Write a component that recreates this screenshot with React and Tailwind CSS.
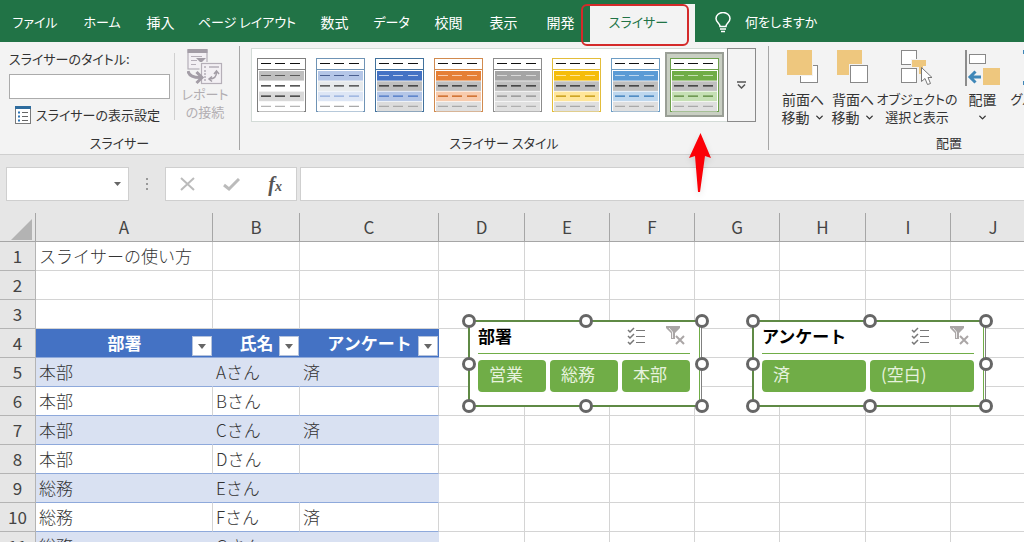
import { ChevronDown } from "lucide-react";

const tabs = [
  { name: "ファイル", width: "w-[70px] text-[13px]" },
  { name: "ホーム", width: "w-[64px] text-[13px]" },
  { name: "挿入", width: "w-[53px]" },
  { name: "ページ レイアウト", width: "w-[120px] text-[13px]" },
  { name: "数式", width: "w-[55px]" },
  { name: "データ", width: "w-[59px] text-[13px]" },
  { name: "校閲", width: "w-[55px]" },
  { name: "表示", width: "w-[55px]" },
  { name: "開発", width: "w-[59px]" },
];

// bars: [fill, dash] from top to bottom
const slicerStyles = [
  { border: "#7f7f7f", bars: [["#bfbfbf", "#595959"], ["#ffffff", "#222222"], ["#d9d9d9", "#222222"], ["#ffffff", "#b5b5b5"]] },
  { border: "#6f93b5", bars: [["#b4c6e7", "#4a5f8f"], ["#e7eaec", "#333333"], ["#dde6f5", "#8faadc"], ["#ffffff", "#a9a9a9"]] },
  { border: "#41719c", bars: [["#4472c4", "#c3d1ec"], ["#bfbfbf", "#222222"], ["#b4c6e7", "#4472c4"], ["#dcdcdc", "#a9a9a9"]] },
  { border: "#d18a4e", bars: [["#e57f35", "#f8cbad"], ["#bfbfbf", "#222222"], ["#f8cbad", "#c55a11"], ["#dfdfdf", "#a9a9a9"]] },
  { border: "#8c8c8c", bars: [["#a5a5a5", "#d9d9d9"], ["#bfbfbf", "#222222"], ["#dbdbdb", "#8c8c8c"], ["#e0e0e0", "#b0b0b0"]] },
  { border: "#e3bd3a", bars: [["#f5bd0b", "#ffe699"], ["#bfbfbf", "#222222"], ["#ffe699", "#bf9000"], ["#dfdfdf", "#a9a9a9"]] },
  { border: "#6d9dc5", bars: [["#5b9bd5", "#bdd7ee"], ["#bfbfbf", "#222222"], ["#bdd7ee", "#2e75b6"], ["#dfdfdf", "#a9a9a9"]] },
  { border: "#6da14c", bars: [["#70ad47", "#c5e0b4"], ["#bfbfbf", "#222222"], ["#c5e0b4", "#548235"], ["#dfdfdf", "#a9a9a9"]] },
];

const columns = [
  { name: "A", width: "w-[177px]" },
  { name: "B", width: "w-[87px]" },
  { name: "C", width: "w-[139px]" },
  { name: "D", width: "w-[86px]" },
  { name: "E", width: "w-[85px]" },
  { name: "F", width: "w-[85px]" },
  { name: "G", width: "w-[85px]" },
  { name: "H", width: "w-[86px]" },
  { name: "I", width: "w-[85px]" },
  { name: "J", width: "w-[85px]" },
];

const records = [
  ["本部", "Aさん", "済"],
  ["本部", "Bさん", ""],
  ["本部", "Cさん", "済"],
  ["本部", "Dさん", ""],
  ["総務", "Eさん", ""],
  ["総務", "Fさん", "済"],
  ["総務", "Gさん", ""],
];

const StyleThumb = ({ style }) => (
  <svg width="49" height="54" viewBox="0 0 49 54">
    <rect x="0.5" y="0.5" width="48" height="53" fill="#fff" stroke={style.border} />
    <path d="M0 11.5h49" stroke={style.border} />
    <path d="M4 5.5h10M18 5.5h10M33 5.5h10" stroke="#111" strokeWidth="1.2" />
    {style.bars.map(([fill, dash], i) => (
      <g key={i}>
        <rect x="2" y={13 + i * 10.3} width="45" height="9.6" fill={fill} />
        <path
          d={`M4 ${17.5 + i * 10.3}h10m4 0h10m5 0h10`}
          stroke={dash}
          strokeWidth="1.2"
        />
      </g>
    ))}
  </svg>
);

const Separator = () => <div className="my-1 w-px shrink-0 bg-[#a6a6a6]" />;

const GroupLabel = ({ children }) => (
  <div className="absolute inset-x-0 bottom-px text-center text-[13px] leading-5">{children}</div>
);

const SettingsIcon = () => (
  <svg width="16" height="18" viewBox="0 0 16 18" fill="none">
    <rect x="0.5" y="0.5" width="15" height="17" fill="#fff" stroke="#7a7a7a" />
    <path d="M0 1.5h16" stroke="#2e6c9e" strokeWidth="3" />
    <path d="M7 6.5h6M7 10.5h6M7 14.5h6" stroke="#666" />
    <path d="M3 6.5h2M3 10.5h2M3 14.5h2" stroke="#2e75b6" strokeWidth="2" />
  </svg>
);

const ReportIcon = () => (
  <svg width="36" height="36" viewBox="0 0 36 36" fill="none" stroke="#b5afb8">
    <rect x="1" y="1" width="19" height="19" fill="#f3f0f4" strokeWidth="1.2" />
    <path d="M0.5 2h20" stroke="#a39da6" strokeWidth="4" />
    <path d="M4 7.500h11M4 11.500h6M4 15.500h5" strokeWidth="1.2" />
    <path d="M9 9h10l-4 4v2h-2v-2z" fill="#a39da6" stroke="none" />
    <path d="M12.500 13h23v23h-23z" fill="#f3f3f3" stroke="none" />
    <rect x="14.5" y="14.5" width="20" height="20" fill="#f3f0f4" strokeWidth="1.2" />
    <path d="M18 21v11" strokeWidth="1.5" strokeDasharray="2 1" />
    <path d="M17 18h2M22 18h10" strokeWidth="1.5" />
    <path d="M22.500 30c5 0 7-2 7-7M27 25l2.500-3 2.500 3M25 27.500L22 30l3 2.500" stroke="#a39da6" strokeWidth="1.5" />
    <path d="M1 22c1 5 5 6.500 12 6.500" stroke="#a39da6" strokeWidth="3" />
    <path d="M9.500 23l5.500 5.500L9.500 34" stroke="#a39da6" strokeWidth="3" />
  </svg>
);

const FrontIcon = () => (
  <svg width="32" height="34" viewBox="0 0 32 34">
    <rect x="13.5" y="15.5" width="17" height="17" fill="#fff" stroke="#888" />
    <path d="M0 0h26v26H0z" fill="#f3f3f3" />
    <path d="M0 0h25v25H0z" fill="#eec77e" />
  </svg>
);

const BackIcon = () => (
  <svg width="32" height="34" viewBox="0 0 32 34">
    <path d="M0 0h25v25H0z" fill="#eec77e" />
    <path d="M12 14h20v20H12z" fill="#f3f3f3" />
    <rect x="13.5" y="15.5" width="17" height="17" fill="#fff" stroke="#888" />
  </svg>
);

const SelectionIcon = () => (
  <svg width="32" height="36" viewBox="0 0 32 36">
    <rect x="0.5" y="0.5" width="15" height="14" fill="#fff" stroke="#888" />
    <rect x="0.5" y="18.5" width="15" height="14" fill="#fff" stroke="#888" />
    <path d="M10 9h16v8H10z" fill="#f3f3f3" />
    <path d="M11 10h14v6h-3v8h-4v-7h-7z" fill="#eec77e" />
    <path d="M20.5 17.5v14l3.5-3 2.5 6 3-1-2.5-6h4z" fill="#fff" stroke="#777" />
  </svg>
);

const AlignIcon = () => (
  <svg width="36" height="36" viewBox="0 0 36 36" fill="none">
    <path d="M1 0v36" stroke="#6a6a6a" strokeWidth="1.5" />
    <rect x="4.5" y="4.5" width="16" height="9" fill="#fff" stroke="#888" />
    <path d="M5 27h11M10.5 21.5L5 27l5.5 5.5" stroke="#3f87b8" strokeWidth="3" />
    <path d="M18 18h17v17H18z" fill="#eec77e" />
  </svg>
);

const GroupIcon = () => (
  <svg width="36" height="36" viewBox="0 0 36 36" fill="none">
    <path d="M3 3h30v30H3z" stroke="#777" />
    <path d="M0 0h6v4H0zM0 31h6v4H0zM30 0h6v4h-6zM30 31h6v4h-6z" fill="#3f87b8" />
  </svg>
);

const MultiSelectIcon = () => (
  <svg width="19" height="18" viewBox="0 0 19 18" fill="none" stroke="#777">
    <path d="M1 3l2 2 4-4M1 9l2 2 4-4M1 15l2 2 4-4" strokeWidth="1.5" />
    <path d="M9 3.5h9M9 9.5h9M9 15.5h9" />
  </svg>
);

const ClearFilterIcon = () => (
  <svg width="20" height="19" viewBox="0 0 20 19" fill="none">
    <path d="M0 0h14v2L9 7v6H5V7L0 2z" fill="#aaa6a6" />
    <path d="M3 2l3.500 4v6" stroke="#fff" strokeWidth="0.8" />
    <path d="M10 10l8 8M18 10l-8 8" stroke="#aaa6a6" strokeWidth="2" />
  </svg>
);

const ArrangeButton = ({ icon, lines, width, menu }) => (
  <button className={`${width} flex shrink-0 flex-col items-center`}>
    <span className="flex h-10 items-start">{icon}</span>
    <span className="leading-[18px] whitespace-nowrap">{lines[0]}</span>
    <span className="flex h-[18px] items-center gap-1 leading-[18px] whitespace-nowrap">
      {lines[1]}
      {menu && <ChevronDown size={11} strokeWidth={3} />}
    </span>
  </button>
);

const handles = [
  "-top-2 -left-2",
  "-top-2 left-1/2 -translate-x-1/2",
  "-top-2 -right-2",
  "top-1/2 -left-2 -translate-y-1/2",
  "top-1/2 -right-2 -translate-y-1/2",
  "-bottom-2 -left-2",
  "-bottom-2 left-1/2 -translate-x-1/2",
  "-right-2 -bottom-2",
];

const Slicer = ({ title, items, position }) => (
  <section
    className={`${position} absolute top-[107px] h-[87px] w-[234px] border-2 border-r border-[#5f8a45] border-r-[#808080] bg-white`}
  >
    <div className="mr-px h-full border-r border-[#70ad47] pt-[2px] pr-[9px] pl-2">
      <header className="flex h-[30px] items-center border-b border-[#70ad47] pb-[6px]">
        <h2 className="flex-1 font-bold text-black">{title}</h2>
        <button aria-label="複数選択" className="mr-5">
          <MultiSelectIcon />
        </button>
        <button aria-label="フィルターのクリア" className="mr-1">
          <ClearFilterIcon />
        </button>
      </header>
      <div className="mt-[6px] flex gap-1">
        {items.map((item) => (
          <button
            key={item}
            className="h-8 flex-1 rounded-sm bg-[#70ad47] pb-1 pl-[11px] text-left leading-7 text-[#e6f2dd]"
          >
            {item}
          </button>
        ))}
      </div>
    </div>
    {handles.map((place) => (
      <span
        key={place}
        className={`${place} absolute size-[14px] rounded-full border-[3px] border-[#666] bg-white`}
      />
    ))}
  </section>
);

const FilterHeader = ({ children }) => (
  <td className="relative border-b border-[#8ea9db] bg-[#4472c4] text-center font-bold text-white">
    {children}
    <button
      aria-label={`${children} フィルター`}
      className="absolute right-px bottom-px flex size-5 items-center justify-center border border-[#b5c3dc] bg-white"
    >
      <svg width="8" height="5" viewBox="0 0 8 5">
        <path d="M0 0h8L4 5z" fill="#666" />
      </svg>
    </button>
  </td>
);

const RowHead = ({ n }) => (
  <th className="h-[29px] border-r border-b border-[#b4b4b4] bg-[#e6e6e6] font-normal text-[#444]">{n}</th>
);

const EmptyCells = ({ count }) =>
  Array.from({ length: count }, (_, i) => (
    <td key={i} className="border-r border-b border-[#d4d4d4]" />
  ));

export default function App() {
  return (
    <div className="h-screen overflow-hidden bg-[#e6e6e6] font-['Noto_Sans_CJK_JP',sans-serif] text-sm text-[#333]">
      {/* Tab bar */}
      <nav className="flex h-[42px] bg-[#217346] pt-1 text-white [font-feature-settings:'palt']">
        {tabs.map((tab) => (
          <button key={tab.name} className={`${tab.width} shrink-0 pb-[2px] whitespace-nowrap`}>
            {tab.name}
          </button>
        ))}
        <button className="relative w-[105px] shrink-0 bg-[#f3f3f3] pr-2 pb-[2px] text-[13px] text-[#217346]">
          スライサー
          <span className="absolute top-0 right-[6px] -bottom-1 -left-[9px] z-10 rounded-md border-2 border-[#d42a2a]" />
        </button>
        <button className="flex shrink-0 items-center gap-[14px] pb-[2px] pl-5 text-[13px] whitespace-nowrap">
          <svg width="16" height="21" viewBox="0 0 16 21" fill="none" stroke="#fff" strokeWidth="1.5">
            <path d="M5 14.5c0-3-4-4-4-8a7 6 0 0114 0c0 4-4 5-4 8zM5 17h6M6 19.5h4" />
          </svg>
          何をしますか
        </button>
      </nav>

      {/* Ribbon */}
      <div className="flex h-[113px] border-b border-[#cfcfcf] bg-[#f3f3f3] [font-feature-settings:'palt']">
        <div className="relative flex w-[239px] shrink-0 pt-[7px] pb-[33px] pl-[9px] text-[13px]">
          <div className="w-[161px]">
            <label htmlFor="slicer-title" className="block leading-5">
              スライサーのタイトル:
            </label>
            <input
              id="slicer-title"
              className="mt-[5px] block h-[25px] w-full border border-[#ababab] bg-white px-1"
            />
            <button className="mt-[6px] flex items-center gap-[5px] pl-[6px] leading-5 whitespace-nowrap">
              <SettingsIcon />
              スライサーの表示設定
            </button>
          </div>
          <div className="mt-1 ml-1 h-[67px] w-px bg-[#d0d0d0]" />
          <button disabled className="flex flex-1 flex-col items-center pr-1 text-[#b1adb1]">
            <span className="h-10">
              <ReportIcon />
            </span>
            <span className="leading-[18px] whitespace-nowrap">レポート</span>
            <span className="leading-[18px] whitespace-nowrap">の接続</span>
          </button>
          <GroupLabel>スライサー</GroupLabel>
        </div>
        <Separator />
        <div className="relative w-[528px] shrink-0 pt-[6px] pl-[11px]">
          <div className="flex h-[74px] w-[505px] border border-[#d3dbd7] bg-white">
            {slicerStyles.map((style, i) => (
              <button
                key={style.border}
                aria-label={`スタイル ${i + 1}`}
                className={
                  i === 7
                    ? "mt-[3px] mb-1 flex w-[59px] items-center justify-center border-2 border-[#9a9f96] bg-[#c9cfc3]"
                    : "mt-[3px] mb-1 flex w-[59px] items-center justify-center"
                }
              >
                <StyleThumb style={style} />
              </button>
            ))}
            <button
              aria-label="その他"
              className="-my-px -mr-px ml-auto flex w-[29px] items-center justify-center border border-[#8a8a8a] bg-[#f3f3f3]"
            >
              <svg width="9" height="8" viewBox="0 0 9 8" fill="none" stroke="#555" strokeWidth="1.5">
                <path d="M0 1h9M1 3.5L4.500 7 8 3.5" />
              </svg>
            </button>
          </div>
          <GroupLabel>スライサー スタイル</GroupLabel>
          {/* Red pointer under the chosen style */}
          <svg
            className="absolute top-[91px] right-[56px] z-10 drop-shadow-md"
            width="24"
            height="60"
            viewBox="0 0 24 60"
          >
            <path d="M12.5 0L23 25l-6-2-5 36h-2L7 23l-6 2z" fill="#fb0007" />
          </svg>
        </div>
        <Separator />
        <div className="relative flex w-[360px] shrink-0 pt-2 pl-[9px]">
          <ArrangeButton width="w-[50px]" icon={<FrontIcon />} lines={["前面へ", "移動"]} menu />
          <ArrangeButton width="w-[50px]" icon={<BackIcon />} lines={["背面へ", "移動"]} menu />
          <ArrangeButton width="w-[78px] text-[13px]" icon={<SelectionIcon />} lines={["オブジェクトの", "選択と表示"]} />
          <ArrangeButton width="w-[53px]" icon={<AlignIcon />} lines={["配置", ""]} menu />
          <ArrangeButton width="w-[64px] text-[13px]" icon={<GroupIcon />} lines={["グループ化", ""]} menu />
          <GroupLabel>配置</GroupLabel>
        </div>
      </div>

      {/* Formula bar */}
      <div className="flex items-center py-3 pl-[6px]">
        <div className="flex h-[34px] w-[123px] border border-[#cfcfcf] bg-white">
          <input aria-label="名前ボックス" className="min-w-0 flex-1 px-1" />
          <button aria-label="名前の一覧" className="px-[7px]">
            <svg width="7" height="4" viewBox="0 0 7 4">
              <path d="M0 0h7L3.5 4z" fill="#666" />
            </svg>
          </button>
        </div>
        <div className="flex w-9 flex-col items-center gap-[3px]">
          <span className="size-[2px] bg-[#999]" />
          <span className="size-[2px] bg-[#999]" />
          <span className="size-[2px] bg-[#999]" />
        </div>
        <div className="flex h-[34px] w-[132px] items-center justify-around border border-[#cfcfcf] bg-white">
          <button aria-label="キャンセル">
            <svg width="15" height="14" viewBox="0 0 15 14" stroke="#bbb" strokeWidth="2">
              <path d="M1 1l13 12M14 1L1 13" />
            </svg>
          </button>
          <button aria-label="入力">
            <svg width="17" height="13" viewBox="0 0 17 13" fill="none" stroke="#bbb" strokeWidth="3">
              <path d="M1 7l5 4L16 1" />
            </svg>
          </button>
          <button className="font-['Liberation_Serif',serif] text-xl leading-6 font-bold text-[#555] italic">
            f<span className="text-sm">x</span>
          </button>
        </div>
        <input aria-label="数式バー" className="ml-[3px] h-[34px] min-w-0 flex-1 border border-r-0 border-[#cfcfcf] bg-white px-2" />
      </div>

      {/* Sheet */}
      <main className="relative bg-white text-[17px] leading-6">
        <table className="w-[996px] table-fixed border-separate border-spacing-0 font-light">
          <thead className="bg-[#e6e6e6]">
            <tr>
              <th className="h-[29px] w-9 border-r border-b border-[#a6a6a6]">
                <svg className="mt-1 ml-auto mr-[3px]" width="21" height="21" viewBox="0 0 21 21">
                  <path d="M21 0v21H0z" fill="#b3b3b3" />
                </svg>
              </th>
              {columns.map((column) => (
                <th
                  key={column.name}
                  className={`${column.width} border-r border-b border-[#a6a6a6] font-normal text-[#444]`}
                >
                  {column.name}
                </th>
              ))}
            </tr>
          </thead>
          <tbody>
            <tr>
              <RowHead n={1} />
              <td className="border-r border-b border-[#d4d4d4] pl-[3px] whitespace-nowrap">スライサーの使い方</td>
              <EmptyCells count={9} />
            </tr>
            <tr>
              <RowHead n={2} />
              <EmptyCells count={10} />
            </tr>
            <tr>
              <RowHead n={3} />
              <EmptyCells count={10} />
            </tr>
            <tr>
              <RowHead n={4} />
              <FilterHeader>部署</FilterHeader>
              <FilterHeader>氏名</FilterHeader>
              <FilterHeader>アンケート</FilterHeader>
              <EmptyCells count={7} />
            </tr>
            {records.map((record, i) => (
              <tr key={i}>
                <RowHead n={i + 5} />
                {record.map((value, j) => (
                  <td
                    key={j}
                    className={
                      i % 2 === 0
                        ? "border-r border-b border-r-[#d9e1f2] border-b-[#8ea9db] bg-[#d9e1f2] pl-[3px]"
                        : "border-r border-b border-r-[#d4d4d4] border-b-[#8ea9db] pl-[3px]"
                    }
                  >
                    {value}
                  </td>
                ))}
                <EmptyCells count={7} />
              </tr>
            ))}
          </tbody>
        </table>
        <Slicer title="部署" items={["営業", "総務", "本部"]} position="left-[468px]" />
        <Slicer title="アンケート" items={["済", "(空白)"]} position="left-[752px]" />
      </main>
    </div>
  );
}
